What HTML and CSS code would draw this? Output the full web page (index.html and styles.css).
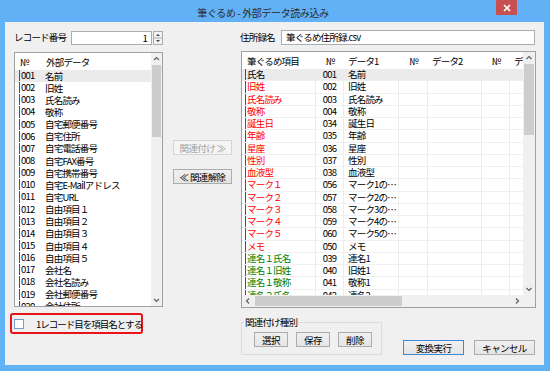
FILE: index.html
```html
<!DOCTYPE html>
<html lang="ja">
<head>
    <meta charset="UTF-8">
    <title>筆ぐるめ - 外部データ読み込み</title>
    <link rel="stylesheet" href="styles.css">
</head>
<body>
<div class="window">
    <div class="titlebar">
        <div class="title">筆ぐるめ - 外部データ読み込み</div>
        <div class="close-btn">
            <svg width="8" height="8" viewBox="0 0 8 8"><path d="M1 1 L7 7 M7 1 L1 7" stroke="#fff" stroke-width="1.6"/></svg>
        </div>
    </div>

    <div class="client">
        <!-- 外部データ側 -->
        <div class="col-left">
            <div class="field-row">
                <span class="field-label">レコード番号</span>
                <div class="text-box num-box">1</div>
                <div class="spin">
                    <svg width="10" height="14" viewBox="0 0 10 14">
                        <rect x="0.5" y="0.5" width="9" height="13" fill="#f3f3f3" stroke="#acacac"/>
                        <line x1="1" y1="7" x2="9" y2="7" stroke="#acacac"/>
                        <path d="M3 5 L5 3 L7 5 Z" fill="#404040"/>
                        <path d="M3 9 L5 11 L7 9 Z" fill="#404040"/>
                    </svg>
                </div>
            </div>

            <div class="list list-src">
                <div class="list-body">
                    <div class="list-head"><span class="c-no">№</span><span class="c-name">外部データ</span></div>
                    <div class="row sel"><span class="c-no">001</span><span class="c-name">名前</span></div>
                    <div class="row"><span class="c-no">002</span><span class="c-name">旧姓</span></div>
                    <div class="row"><span class="c-no">003</span><span class="c-name">氏名読み</span></div>
                    <div class="row"><span class="c-no">004</span><span class="c-name">敬称</span></div>
                    <div class="row"><span class="c-no">005</span><span class="c-name">自宅郵便番号</span></div>
                    <div class="row"><span class="c-no">006</span><span class="c-name">自宅住所</span></div>
                    <div class="row"><span class="c-no">007</span><span class="c-name">自宅電話番号</span></div>
                    <div class="row"><span class="c-no">008</span><span class="c-name">自宅FAX番号</span></div>
                    <div class="row"><span class="c-no">009</span><span class="c-name">自宅携帯番号</span></div>
                    <div class="row"><span class="c-no">010</span><span class="c-name">自宅E-Mailアドレス</span></div>
                    <div class="row"><span class="c-no">011</span><span class="c-name">自宅URL</span></div>
                    <div class="row"><span class="c-no">012</span><span class="c-name">自由項目１</span></div>
                    <div class="row"><span class="c-no">013</span><span class="c-name">自由項目２</span></div>
                    <div class="row"><span class="c-no">014</span><span class="c-name">自由項目３</span></div>
                    <div class="row"><span class="c-no">015</span><span class="c-name">自由項目４</span></div>
                    <div class="row"><span class="c-no">016</span><span class="c-name">自由項目５</span></div>
                    <div class="row"><span class="c-no">017</span><span class="c-name">会社名</span></div>
                    <div class="row"><span class="c-no">018</span><span class="c-name">会社名読み</span></div>
                    <div class="row"><span class="c-no">019</span><span class="c-name">会社郵便番号</span></div>
                    <div class="row"><span class="c-no">020</span><span class="c-name">会社住所</span></div>
                </div>
                <div class="vscroll">
                    <div class="arrow"><svg width="11" height="12" viewBox="0 0 11 12"><path d="M3 7 L5.5 4.5 L8 7" fill="none" stroke="#606060" stroke-width="1.2"/></svg></div>
                    <div class="track"><div class="thumb thumb-src"></div></div>
                    <div class="arrow"><svg width="11" height="12" viewBox="0 0 11 12"><path d="M3 5 L5.5 7.5 L8 5" fill="none" stroke="#606060" stroke-width="1.2"/></svg></div>
                </div>
            </div>

            <label class="check-row"><span class="check-box"></span>1レコード目を項目名とする</label>
        </div>

        <!-- 中央ボタン -->
        <div class="col-mid">
            <button class="btn" disabled>関連付け&nbsp;≫</button>
            <button class="btn">≪&nbsp;関連解除</button>
        </div>

        <!-- 住所録側 -->
        <div class="col-right">
            <div class="field-row">
                <span class="field-label label-book">住所録名</span>
                <div class="text-box book-box">筆ぐるめ住所録.csv</div>
            </div>

            <div class="list list-dst">
                <div class="list-body">
                    <div class="list-head">
                        <span class="c-item">筆ぐるめ項目</span><span class="c-no">№</span><span class="c-data">データ1</span><span class="c-no c-no2">№</span><span class="c-data c-data2">データ2</span><span class="c-no">№</span><span class="c-last">データ3</span>
                    </div>
                    <div class="row sel"><span class="c-item">氏名</span><span class="c-no">001</span><span class="c-data">名前</span><span class="c-no c-no2"></span><span class="c-data c-data2"></span><span class="c-no"></span><span class="c-last"></span></div>
                    <div class="row red"><span class="c-item">旧姓</span><span class="c-no">002</span><span class="c-data">旧姓</span><span class="c-no c-no2"></span><span class="c-data c-data2"></span><span class="c-no"></span><span class="c-last"></span></div>
                    <div class="row red"><span class="c-item">氏名読み</span><span class="c-no">003</span><span class="c-data">氏名読み</span><span class="c-no c-no2"></span><span class="c-data c-data2"></span><span class="c-no"></span><span class="c-last"></span></div>
                    <div class="row red"><span class="c-item">敬称</span><span class="c-no">004</span><span class="c-data">敬称</span><span class="c-no c-no2"></span><span class="c-data c-data2"></span><span class="c-no"></span><span class="c-last"></span></div>
                    <div class="row red"><span class="c-item">誕生日</span><span class="c-no">034</span><span class="c-data">誕生日</span><span class="c-no c-no2"></span><span class="c-data c-data2"></span><span class="c-no"></span><span class="c-last"></span></div>
                    <div class="row red"><span class="c-item">年齢</span><span class="c-no">035</span><span class="c-data">年齢</span><span class="c-no c-no2"></span><span class="c-data c-data2"></span><span class="c-no"></span><span class="c-last"></span></div>
                    <div class="row red"><span class="c-item">星座</span><span class="c-no">036</span><span class="c-data">星座</span><span class="c-no c-no2"></span><span class="c-data c-data2"></span><span class="c-no"></span><span class="c-last"></span></div>
                    <div class="row red"><span class="c-item">性別</span><span class="c-no">037</span><span class="c-data">性別</span><span class="c-no c-no2"></span><span class="c-data c-data2"></span><span class="c-no"></span><span class="c-last"></span></div>
                    <div class="row red"><span class="c-item">血液型</span><span class="c-no">038</span><span class="c-data">血液型</span><span class="c-no c-no2"></span><span class="c-data c-data2"></span><span class="c-no"></span><span class="c-last"></span></div>
                    <div class="row red"><span class="c-item">マーク１</span><span class="c-no">056</span><span class="c-data">マーク1の…</span><span class="c-no c-no2"></span><span class="c-data c-data2"></span><span class="c-no"></span><span class="c-last"></span></div>
                    <div class="row red"><span class="c-item">マーク２</span><span class="c-no">057</span><span class="c-data">マーク2の…</span><span class="c-no c-no2"></span><span class="c-data c-data2"></span><span class="c-no"></span><span class="c-last"></span></div>
                    <div class="row red"><span class="c-item">マーク３</span><span class="c-no">058</span><span class="c-data">マーク3の…</span><span class="c-no c-no2"></span><span class="c-data c-data2"></span><span class="c-no"></span><span class="c-last"></span></div>
                    <div class="row red"><span class="c-item">マーク４</span><span class="c-no">059</span><span class="c-data">マーク4の…</span><span class="c-no c-no2"></span><span class="c-data c-data2"></span><span class="c-no"></span><span class="c-last"></span></div>
                    <div class="row red"><span class="c-item">マーク５</span><span class="c-no">060</span><span class="c-data">マーク5の…</span><span class="c-no c-no2"></span><span class="c-data c-data2"></span><span class="c-no"></span><span class="c-last"></span></div>
                    <div class="row red"><span class="c-item">メモ</span><span class="c-no">050</span><span class="c-data">メモ</span><span class="c-no c-no2"></span><span class="c-data c-data2"></span><span class="c-no"></span><span class="c-last"></span></div>
                    <div class="row green"><span class="c-item">連名１氏名</span><span class="c-no">039</span><span class="c-data">連名1</span><span class="c-no c-no2"></span><span class="c-data c-data2"></span><span class="c-no"></span><span class="c-last"></span></div>
                    <div class="row green"><span class="c-item">連名１旧姓</span><span class="c-no">040</span><span class="c-data">旧姓1</span><span class="c-no c-no2"></span><span class="c-data c-data2"></span><span class="c-no"></span><span class="c-last"></span></div>
                    <div class="row green"><span class="c-item">連名１敬称</span><span class="c-no">041</span><span class="c-data">敬称1</span><span class="c-no c-no2"></span><span class="c-data c-data2"></span><span class="c-no"></span><span class="c-last"></span></div>
                    <div class="row green"><span class="c-item">連名２氏名</span><span class="c-no">042</span><span class="c-data">連名2</span><span class="c-no c-no2"></span><span class="c-data c-data2"></span><span class="c-no"></span><span class="c-last"></span></div>
                </div>
                <div class="vscroll">
                    <div class="arrow arrow-w"><svg width="12" height="12" viewBox="0 0 12 12"><path d="M3.5 7 L6 4.5 L8.5 7" fill="none" stroke="#606060" stroke-width="1.2"/></svg></div>
                    <div class="track"><div class="thumb thumb-dst"></div></div>
                    <div class="arrow arrow-w"><svg width="12" height="12" viewBox="0 0 12 12"><path d="M3.5 5 L6 7.5 L8.5 5" fill="none" stroke="#606060" stroke-width="1.2"/></svg></div>
                </div>
                <div class="hscroll">
                    <div class="arrow arrow-w"><svg width="12" height="12" viewBox="0 0 12 12"><path d="M7 3.5 L4.5 6 L7 8.5" fill="none" stroke="#606060" stroke-width="1.2"/></svg></div>
                    <div class="htrack"><div class="hthumb"></div></div>
                    <div class="arrow arrow-w"><svg width="12" height="12" viewBox="0 0 12 12"><path d="M5 3.5 L7.5 6 L5 8.5" fill="none" stroke="#606060" stroke-width="1.2"/></svg></div>
                </div>
                <div class="corner"></div>
            </div>

            <div class="bottom-row">
                <fieldset class="group">
                    <legend>関連付け種別</legend>
                    <div class="group-buttons">
                        <button class="btn btn-small">選択</button>
                        <button class="btn btn-small">保存</button>
                        <button class="btn btn-small">削除</button>
                    </div>
                </fieldset>
                <div class="actions">
                    <button class="btn btn-action btn-default">変換実行</button>
                    <button class="btn btn-action">キャンセル</button>
                </div>
            </div>
        </div>
    </div>
</div>
</body>
</html>
```

FILE: styles.css
```css
body {
    margin: 0;
    font-family: "Noto Sans CJK JP", "Noto Sans", sans-serif;
    font-size: 9.5px;
    letter-spacing: -0.8px;
    color: #000;
}
.window {
    width: 550px;
    height: 371px;
    background-color: #62b0f5;
    display: flex;
    flex-direction: column;
}
.titlebar {
    height: 22px;
    display: flex;
    align-items: flex-start;
}
.title {
    flex: 1;
    text-align: center;
    padding: 6px 0 0 30px;
    line-height: 14px;
    font-size: 10px;
    letter-spacing: -0.4px;
    color: #2b2b2b;
    white-space: pre;
}
.close-btn {
    width: 21px;
    height: 15px;
    margin-right: 33px;
    background-color: #c75050;
    display: flex;
    align-items: center;
    justify-content: center;
}
.client {
    margin: 0 6px 6px 5px;
    height: 343px;
    background-color: #f0f0f0;
    display: flex;
    padding: 8px 8px 0 9px;
    box-sizing: border-box;
}

/* 左カラム */
.col-left {
    width: 149px;
    display: flex;
    flex-direction: column;
}
.field-row {
    height: 15px;
    display: flex;
    align-items: flex-end;
    white-space: nowrap;
}
.field-label {
    width: 57px;
    align-self: center;
    line-height: 13px;
}
.text-box {
    height: 14px;
    line-height: 12px;
    background-color: #fff;
    border: 1px solid #abadb3;
    box-sizing: border-box;
}
.num-box {
    width: 81px;
    text-align: right;
    padding-right: 4px;
}
.spin {
    margin-left: 1px;
    height: 14px;
}
.spin svg {
    display: block;
}

.list {
    display: grid;
    background-color: #fff;
    border: 1px solid #a0a0a0;
    box-sizing: border-box;
    overflow: hidden;
}
.list-body {
    overflow: hidden;
    min-width: 0;
}
.list-head {
    height: 17px;
    display: flex;
    align-items: center;
    padding-left: 4px;
    white-space: nowrap;
    line-height: 12px;
}
.row {
    height: 12.15px;
    display: flex;
    align-items: stretch;
    padding-left: 4px;
    white-space: nowrap;
    line-height: 11px;
}
.row span {
    display: flex;
    align-items: center;
    box-sizing: border-box;
}
.row.sel {
    background-color: #ebebeb;
}

.list-src {
    margin-top: 7px;
    height: 255px;
    grid-template-columns: 1fr 11px;
}
.list-src .list-head .c-no {
    width: 26px;
    padding-left: 1px;
}
.list-src .row .c-no {
    width: 26px;
    padding-left: 1px;
    border-left: 1px solid #505050;
    margin-bottom: 1px;
}

.vscroll {
    display: flex;
    flex-direction: column;
    background-color: #f0f0f0;
}
.arrow {
    height: 12px;
    flex: none;
}
.arrow svg {
    display: block;
}
.track {
    flex: 1;
}
.thumb {
    background-color: #cdcdcd;
    margin: 0 1px;
}
.thumb-src {
    height: 72px;
}
.thumb-dst {
    height: 71px;
}

.check-row {
    margin: 6px 0 0 -4px;
    width: 133px;
    height: 21px;
    border: 2px solid #e8141a;
    border-radius: 3px;
    box-sizing: border-box;
    display: flex;
    align-items: center;
    padding-left: 2px;
    white-space: nowrap;
    letter-spacing: -1px;
    line-height: 12px;
}
.check-box {
    width: 10px;
    height: 10px;
    border: 1px solid #7b9ccb;
    background-color: #fff;
    box-sizing: border-box;
    margin-right: 12px;
    flex: none;
}

/* 中央 */
.col-mid {
    width: 59px;
    margin-left: 10px;
    padding-top: 110px;
    display: flex;
    flex-direction: column;
    gap: 14px;
}
.btn {
    height: 15px;
    padding: 0;
    font-family: inherit;
    font-size: 9.5px;
    letter-spacing: -0.6px;
    color: #000;
    border: 1px solid #acacac;
    background: linear-gradient(#f0f0f0, #e5e5e5);
    box-sizing: border-box;
    line-height: 12px;
    white-space: nowrap;
}
.btn:disabled {
    color: #a0a0a0;
    border-color: #d5d5d5;
    background: #f4f4f4;
}

/* 右カラム */
.col-right {
    width: 296px;
    margin-left: 8px;
    display: flex;
    flex-direction: column;
}
.label-book {
    width: 41px;
}
.book-box {
    width: 254px;
    height: 15px;
    padding-left: 4px;
    line-height: 13px;
}

.list-dst {
    margin: 6px 0 0 1px;
    width: 295px;
    height: 257px;
    grid-template-columns: 1fr 12px;
    grid-template-rows: 1fr 12px;
}
.list-dst .list-head,
.list-dst .row {
    padding-left: 3px;
}
.list-dst .row {
    height: 12.25px;
    border-bottom: 1px solid #f0f0f0;
    box-sizing: border-box;
}
.list-dst span {
    flex: none;
    box-sizing: border-box;
}
.list-dst .c-item {
    width: 71px;
    padding-left: 2px;
}
.list-dst .row .c-item {
    border-left: 1px solid #505050;
    padding-left: 1px;
}
.list-dst .c-no {
    width: 28px;
    justify-content: center;
    text-align: center;
}
.list-dst .c-no2 {
    width: 29px;
}
.list-dst .c-data {
    width: 55px;
    padding-left: 4px;
}
.list-dst .c-data2 {
    width: 54px;
}
.list-dst .c-last {
    width: 40px;
    padding-left: 4px;
}
.list-dst .row span {
    border-right: 1px solid #ececec;
}
.list-dst .row.red .c-item {
    color: #f00;
}
.list-dst .row.green .c-item {
    color: #008000;
}

.hscroll {
    display: flex;
    background-color: #f0f0f0;
}
.arrow-w {
    width: 12px;
}
.htrack {
    flex: 1;
    padding-left: 1px;
}
.hthumb {
    width: 147px;
    height: 10px;
    margin-top: 1px;
    background-color: #cdcdcd;
}
.corner {
    background-color: #f0f0f0;
}

.bottom-row {
    margin: 8px 0 0 1px;
    display: flex;
    align-items: flex-end;
}
.group {
    width: 141px;
    height: 39px;
    margin: 0;
    padding: 0;
    border: 1px solid #dcdcdc;
    box-sizing: border-box;
}
.group legend {
    margin-left: 2px;
    padding: 0 1px;
    line-height: 12px;
}
.group-buttons {
    display: flex;
    gap: 8px;
    padding: 4px 0 0 12px;
}
.btn-small {
    width: 34px;
}
.actions {
    display: flex;
    gap: 10px;
    margin-left: 21px;
}
.btn-action {
    width: 61px;
}
.btn-default {
    border-color: #3c8ad8;
}
```
